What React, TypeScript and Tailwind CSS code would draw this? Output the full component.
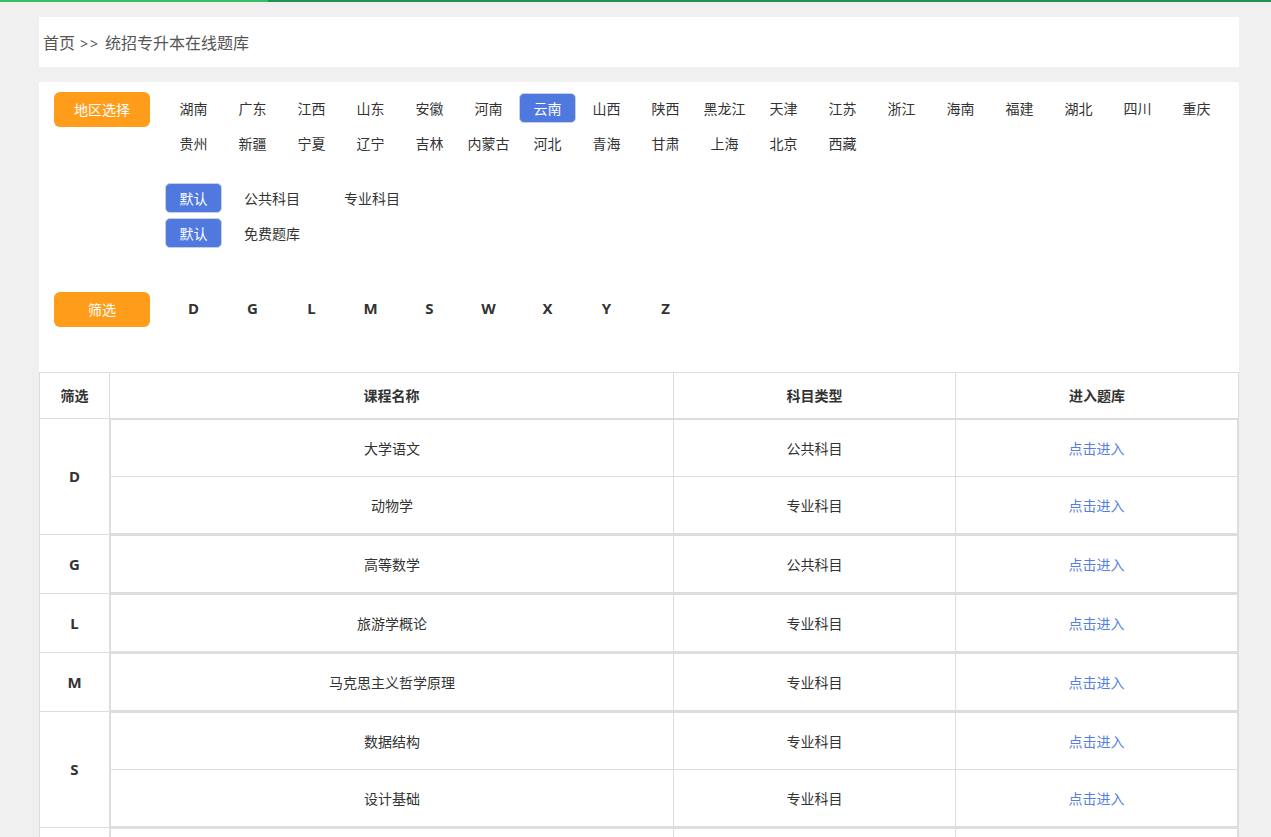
const regionsRow1 = ['湖南', '广东', '江西', '山东', '安徽', '河南', '云南', '山西', '陕西', '黑龙江', '天津', '江苏', '浙江', '海南', '福建', '湖北', '四川', '重庆'];
const regionsRow2 = ['贵州', '新疆', '宁夏', '辽宁', '吉林', '内蒙古', '河北', '青海', '甘肃', '上海', '北京', '西藏'];
const letters = ['D', 'G', 'L', 'M', 'S', 'W', 'X', 'Y', 'Z'];

interface Course {
  name: string;
  type: string;
}

interface Group {
  letter: string;
  courses: Course[];
}

const groups: Group[] = [
  { letter: 'D', courses: [{ name: '大学语文', type: '公共科目' }, { name: '动物学', type: '专业科目' }] },
  { letter: 'G', courses: [{ name: '高等数学', type: '公共科目' }] },
  { letter: 'L', courses: [{ name: '旅游学概论', type: '专业科目' }] },
  { letter: 'M', courses: [{ name: '马克思主义哲学原理', type: '专业科目' }] },
  { letter: 'S', courses: [{ name: '数据结构', type: '专业科目' }, { name: '设计基础', type: '专业科目' }] },
  { letter: 'W', courses: [{ name: '文学概论', type: '专业科目' }] },
  { letter: 'X', courses: [{ name: '现代汉语', type: '专业科目' }] },
  { letter: 'Y', courses: [{ name: '英语', type: '公共科目' }] },
  { letter: 'Z', courses: [{ name: '政治', type: '公共科目' }] },
];

const SELECTED = '云南';

function OrangeButton({ label }: { label: string }) {
  return (
    <div className="w-[96px] h-[35px] shrink-0 rounded-[6px] bg-[#ff9c1a] text-white text-[14px] flex items-center justify-center">
      {label}
    </div>
  );
}

function DefaultButton() {
  return (
    <div className="w-[57px] h-[30px] rounded-[5px] border border-[#c9cfe0] bg-[#5079e0] text-white text-[14px] flex items-center justify-center">
      默认
    </div>
  );
}

export default function App() {
  return (
    <div
      className="min-h-screen bg-[#f0f0f0] text-[#333]"
      style={{ fontFamily: '"Noto Sans", "Noto Sans CJK SC", sans-serif' }}
    >
      {/* top bar */}
      <div className="flex h-[2px]">
        <div className="w-[268px] bg-[#3dbb62]" />
        <div className="flex-1 bg-[#1f9150]" />
      </div>

      <div className="ml-[39px] w-[1200px] pt-[15px]">
        {/* Breadcrumb */}
        <div className="h-[50px] bg-white flex items-center pl-[4px] pt-[2px] text-[16px] text-[#555]">
          首页 <span className="mx-[5px] text-[14px] tracking-[2px]">&gt;&gt;</span> 统招专升本在线题库
        </div>

        {/* Filter panel */}
        <div className="mt-[15px] bg-white pt-[10px] pl-[15px] pb-[45px]">
          <div className="flex">
            <OrangeButton label="地区选择" />
            <div className="ml-[15px] mt-[1px] flex flex-col gap-[5px]">
              {[regionsRow1, regionsRow2].map((row, i) => (
                <div key={i} className="flex gap-[2px]">
                  {row.map((r) => (
                    <div
                      key={r}
                      className={`w-[57px] h-[30px] flex items-center justify-center text-[14px] rounded-[5px] ${
                        r === SELECTED ? 'bg-[#5079e0] text-white border border-[#c9cfe0]' : 'text-[#333]'
                      }`}
                    >
                      {r}
                    </div>
                  ))}
                </div>
              ))}
            </div>
          </div>

          <div className="mt-[25px] pl-[111px] flex flex-col gap-[5px]">
            <div className="flex items-center">
              <DefaultButton />
              <div className="w-[80px] ml-[10px] text-center text-[14px]">公共科目</div>
              <div className="w-[80px] ml-[20px] text-center text-[14px]">专业科目</div>
            </div>
            <div className="flex items-center">
              <DefaultButton />
              <div className="w-[80px] ml-[10px] text-center text-[14px]">免费题库</div>
            </div>
          </div>

          <div className="mt-[44px] flex">
            <OrangeButton label="筛选" />
            <div className="ml-[15px] mt-[1px] flex gap-[2px]">
              {letters.map((l) => (
                <div key={l} className="w-[57px] h-[30px] flex items-center justify-center text-[15px] font-bold text-[#333]">
                  {l}
                </div>
              ))}
            </div>
          </div>
        </div>

        {/* Table */}
        <div className="bg-white text-[14px]">
          <div className="flex h-[47px] border-t border-b border-[#ddd] font-bold">
            <div className="w-[71px] border-l border-r border-[#ddd] flex items-center justify-center">筛选</div>
            <div className="w-[564px] border-r border-[#ddd] flex items-center justify-center">课程名称</div>
            <div className="w-[282px] border-r border-[#ddd] flex items-center justify-center">科目类型</div>
            <div className="w-[283px] border-r border-[#ddd] flex items-center justify-center">进入题库</div>
          </div>

          {groups.map((g) => (
            <div key={g.letter} className="flex">
              <div className="w-[71px] border-l border-r border-b border-[#ddd] flex items-center justify-center font-bold text-[15px]">
                {g.letter}
              </div>
              <div className="flex-1 border-r border-b border-[#ddd]">
                <div className="border border-[#ddd]">
                  {g.courses.map((c, i) => (
                    <div key={c.name} className={`flex h-[56px] ${i > 0 ? 'border-t border-[#ddd] h-[57px]' : ''}`}>
                      <div className="w-[563px] border-r border-[#ddd] flex items-center justify-center">{c.name}</div>
                      <div className="w-[282px] border-r border-[#ddd] flex items-center justify-center">{c.type}</div>
                      <div className="flex-1 flex items-center justify-center text-[#587fe0]">点击进入</div>
                    </div>
                  ))}
                </div>
              </div>
            </div>
          ))}
        </div>
      </div>
    </div>
  );
}
